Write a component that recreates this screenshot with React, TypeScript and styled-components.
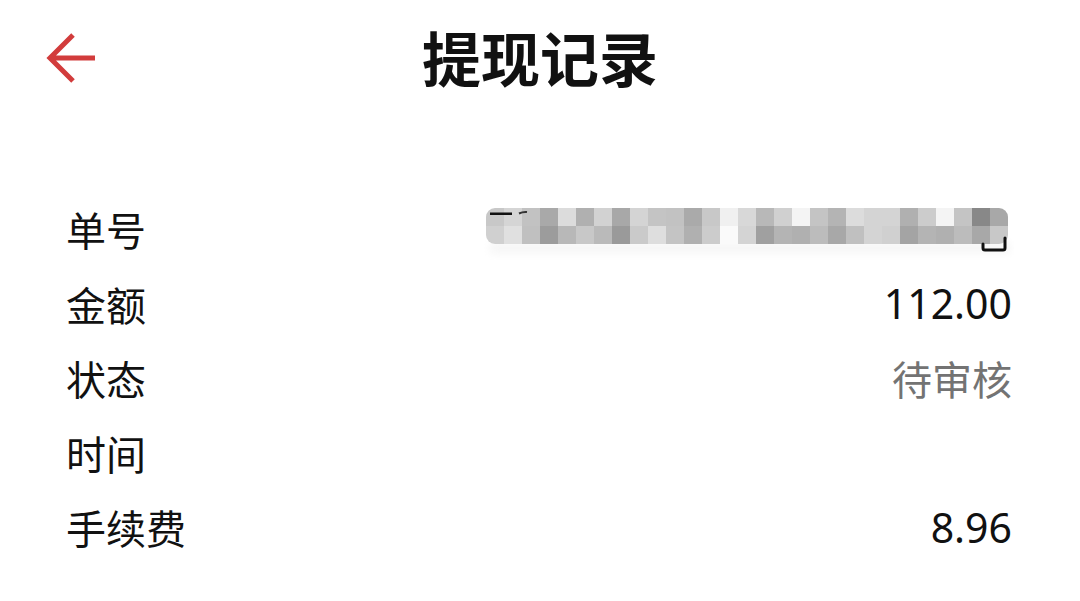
import React from 'react'
import styled, { createGlobalStyle } from 'styled-components'

const GlobalStyle = createGlobalStyle`
  html, body {
    margin: 0;
    padding: 0;
    background: #ffffff;
  }
  body {
    font-family: "Noto Sans", "Noto Sans CJK SC", sans-serif;
    color: #111111;
  }
`

const Page = styled.div`
  width: 1080px;
  height: 601px;
  display: flex;
  flex-direction: column;
  background: #ffffff;
  overflow: hidden;
`

const Header = styled.header`
  height: 120px;
  display: grid;
  grid-template-columns: 140px 1fr 140px;
  align-items: center;
`

const BackButton = styled.button`
  width: 140px;
  height: 120px;
  padding: 0 0 4px 45px;
  border: none;
  background: transparent;
  display: flex;
  align-items: center;
  cursor: pointer;
`

const Title = styled.h1`
  margin: 0;
  padding-bottom: 8px;
  text-align: center;
  font-family: "Noto Sans CJK SC", sans-serif;
  font-size: 59px;
  font-weight: 700;
  color: #111111;
  line-height: 1;
`

const List = styled.div`
  display: flex;
  flex-direction: column;
  padding: 72px 68px 0 66px;
`

const Row = styled.div`
  height: 74.5px;
  display: flex;
  align-items: center;
  justify-content: space-between;
`

const Label = styled.span`
  font-family: "Noto Sans CJK SC", sans-serif;
  font-size: 40px;
  line-height: 1;
  color: #111111;
`

const Value = styled.span<{ $muted?: boolean; $cjk?: boolean }>`
  font-family: ${p => (p.$cjk ? '"Noto Sans CJK SC"' : '"Noto Sans", "Noto Sans CJK SC"')}, sans-serif;
  font-size: ${p => (p.$cjk ? '40px' : '41px')};
  line-height: 1;
  color: ${p => (p.$muted ? '#737373' : '#111111')};
`

const Mosaic = styled.svg`
  display: block;
  margin-right: -2px;
  margin-top: 6px;
`

const tops = [
  '#c8c8c8', '#d5d5d5', '#c2c2c2', '#a9a9a9', '#dcdcdc', '#b0b0b0', '#d2d2d2', '#a8a8a8',
  '#d4d4d4', '#c4c4c4', '#c2c2c2', '#aaaaaa', '#c8c8c8', '#f0f0f0', '#d8d8d8', '#b8b8b8',
  '#d0d0d0', '#f4f4f4', '#c4c4c4', '#b4b4b4', '#dcdcdc', '#d4d4d4', '#d4d4d4', '#b0b0b0',
  '#cccccc', '#f4f4f4', '#c4c4c4', '#888888', '#a8a8a8',
]
const bottoms = [
  '#d0d0d0', '#e0e0e0', '#c0c0c0', '#9c9c9c', '#b8b8b8', '#c8c8c8', '#bababa', '#9a9a9a',
  '#cacaca', '#dedede', '#c4c4c4', '#b0b0b0', '#cccccc', '#fafafa', '#d4d4d4', '#a0a0a0',
  '#b4b4b4', '#b0b0b0', '#bcbcbc', '#a8a8a8', '#c0c0c0', '#d4d4d4', '#d0d0d0', '#a4a4a4',
  '#b4b4b4', '#b0b0b0', '#bcbcbc', '#a8a8a8', '#c8c8c8',
]

const BlurredOrderNo: React.FC = () => (
  <Mosaic width="532" height="56" viewBox="0 0 532 56">
    <defs>
      <filter id="soft" x="-10%" y="-50%" width="120%" height="200%">
        <feGaussianBlur stdDeviation="4" />
      </filter>
      <clipPath id="cells">
        <rect x="4" y="4" width="522" height="36" rx="9" />
      </clipPath>
    </defs>
    <rect x="8" y="38" width="520" height="12" fill="#f6f6f6" filter="url(#soft)" />
    <g clipPath="url(#cells)">
      {tops.map((c, i) => (
        <rect key={'t' + i} x={4 + i * 18} y={4} width={18} height={18} fill={c} />
      ))}
      {bottoms.map((c, i) => (
        <rect key={'b' + i} x={4 + i * 18} y={22} width={18} height={18} fill={c} />
      ))}
    </g>
    <rect x="8" y="8.5" width="22" height="2.5" fill="#111" />
    <path d="M37 9.5 Q41 7.5 45 8" stroke="#333" strokeWidth="2" fill="none" />
    <path
      d="M501 40 V44 Q501 46 503 46 H521 Q523 46 523 44 V34"
      stroke="#111"
      strokeWidth="3"
      fill="none"
      strokeLinecap="round"
    />
  </Mosaic>
)

const BackArrow: React.FC = () => (
  <svg width="56" height="56" viewBox="0 0 56 56">
    <path
      d="M5 28 H50 M28 5 L5 28 L28 51"
      stroke="#d23c3c"
      strokeWidth="5"
      fill="none"
      strokeLinecap="butt"
      strokeLinejoin="miter"
    />
  </svg>
)

export default function App() {
  return (
    <Page>
      <GlobalStyle />
      <Header>
        <BackButton aria-label="返回">
          <BackArrow />
        </BackButton>
        <Title>提现记录</Title>
        <div />
      </Header>
      <List>
        <Row>
          <Label>单号</Label>
          <BlurredOrderNo />
        </Row>
        <Row>
          <Label>金额</Label>
          <Value>112.00</Value>
        </Row>
        <Row>
          <Label>状态</Label>
          <Value $muted $cjk>待审核</Value>
        </Row>
        <Row>
          <Label>时间</Label>
          <Value />
        </Row>
        <Row>
          <Label>手续费</Label>
          <Value>8.96</Value>
        </Row>
      </List>
    </Page>
  )
}
